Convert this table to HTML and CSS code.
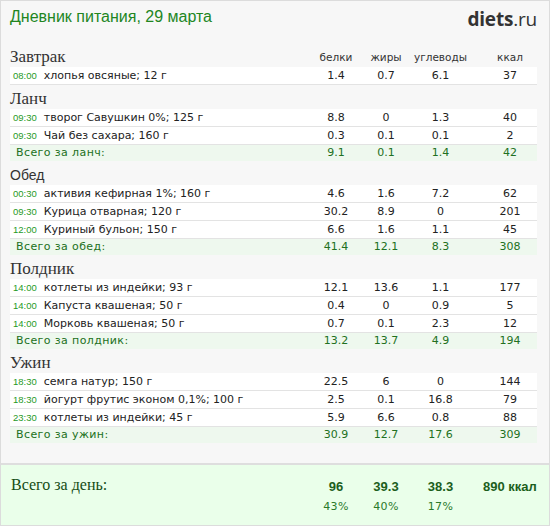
FILE: index.html
```html
<!DOCTYPE html>
<html lang="ru">
<head>
<meta charset="utf-8">
<title>Дневник питания</title>
<link rel="stylesheet" href="styles.css">
</head>
<body>
<div class="diary">
  <div class="main">
    <header class="top">
      <h1 class="title">Дневник питания, 29 марта</h1>
      <div class="logo"><span class="logo-b">diets</span>.ru</div>
    </header>

    <section class="meal meal-first">
      <div class="meal-head">
        <h2 class="meal-name">Завтрак</h2>
        <span class="lbl">белки</span><span class="lbl">жиры</span><span class="lbl c3">углеводы</span><span class="lbl">ккал</span>
      </div>
      <div class="row"><div class="food"><span class="time">08:00</span>хлопья овсяные; 12 г</div><span class="num">1.4</span><span class="num">0.7</span><span class="num c3">6.1</span><span class="num">37</span></div>
    </section>

    <section class="meal">
      <div class="meal-head"><h2 class="meal-name">Ланч</h2></div>
      <div class="row"><div class="food"><span class="time">09:30</span>творог Савушкин 0%; 125 г</div><span class="num">8.8</span><span class="num">0</span><span class="num c3">1.3</span><span class="num">40</span></div>
      <div class="row"><div class="food"><span class="time">09:30</span>Чай без сахара; 160 г</div><span class="num">0.3</span><span class="num">0.1</span><span class="num c3">0.1</span><span class="num">2</span></div>
      <div class="row total"><div class="food">Всего за ланч:</div><span class="num">9.1</span><span class="num">0.1</span><span class="num c3">1.4</span><span class="num">42</span></div>
    </section>

    <section class="meal">
      <div class="meal-head"><h2 class="meal-name meal-sans">Обед</h2></div>
      <div class="row"><div class="food"><span class="time">00:30</span>активия кефирная 1%; 160 г</div><span class="num">4.6</span><span class="num">1.6</span><span class="num c3">7.2</span><span class="num">62</span></div>
      <div class="row"><div class="food"><span class="time">09:30</span>Курица отварная; 120 г</div><span class="num">30.2</span><span class="num">8.9</span><span class="num c3">0</span><span class="num">201</span></div>
      <div class="row"><div class="food"><span class="time">12:00</span>Куриный бульон; 150 г</div><span class="num">6.6</span><span class="num">1.6</span><span class="num c3">1.1</span><span class="num">45</span></div>
      <div class="row total"><div class="food">Всего за обед:</div><span class="num">41.4</span><span class="num">12.1</span><span class="num c3">8.3</span><span class="num">308</span></div>
    </section>

    <section class="meal">
      <div class="meal-head"><h2 class="meal-name">Полдник</h2></div>
      <div class="row"><div class="food"><span class="time">14:00</span>котлеты из индейки; 93 г</div><span class="num">12.1</span><span class="num">13.6</span><span class="num c3">1.1</span><span class="num">177</span></div>
      <div class="row"><div class="food"><span class="time">14:00</span>Капуста квашеная; 50 г</div><span class="num">0.4</span><span class="num">0</span><span class="num c3">0.9</span><span class="num">5</span></div>
      <div class="row"><div class="food"><span class="time">14:00</span>Морковь квашеная; 50 г</div><span class="num">0.7</span><span class="num">0.1</span><span class="num c3">2.3</span><span class="num">12</span></div>
      <div class="row total"><div class="food">Всего за полдник:</div><span class="num">13.2</span><span class="num">13.7</span><span class="num c3">4.9</span><span class="num">194</span></div>
    </section>

    <section class="meal">
      <div class="meal-head"><h2 class="meal-name">Ужин</h2></div>
      <div class="row"><div class="food"><span class="time">18:30</span>семга натур; 150 г</div><span class="num">22.5</span><span class="num">6</span><span class="num c3">0</span><span class="num">144</span></div>
      <div class="row"><div class="food"><span class="time">18:30</span>йогурт фрутис эконом 0,1%; 100 г</div><span class="num">2.5</span><span class="num">0.1</span><span class="num c3">16.8</span><span class="num">79</span></div>
      <div class="row"><div class="food"><span class="time">23:30</span>котлеты из индейки; 45 г</div><span class="num">5.9</span><span class="num">6.6</span><span class="num c3">0.8</span><span class="num">88</span></div>
      <div class="row total"><div class="food">Всего за ужин:</div><span class="num">30.9</span><span class="num">12.7</span><span class="num c3">17.6</span><span class="num">309</span></div>
    </section>
  </div>

  <footer class="day">
    <div class="day-label">Всего за день:</div>
    <span class="day-num">96</span><span class="day-num">39.3</span><span class="day-num c3">38.3</span><span class="day-num day-kcal">890 ккал</span>
    <span class="day-pct">43%</span><span class="day-pct">40%</span><span class="day-pct c3">17%</span><span class="day-pct"></span>
  </footer>
</div>
</body>
</html>
```
FILE: styles.css
```css
* { box-sizing: border-box; }

html, body {
  margin: 0;
  padding: 0;
  background: #f7f7f7;
}

.diary {
  width: 550px;
  height: 526px;
  border: 1px solid #dcdcdc;
  background: #f7f7f7;
  display: flex;
  flex-direction: column;
  font-family: "DejaVu Sans", Verdana, sans-serif;
  color: #222;
}

.main {
  padding: 6px 12px 0 9px;
}

.top {
  display: flex;
  justify-content: space-between;
  align-items: flex-start;
}

.title {
  margin: 0;
  font-family: "Liberation Sans", Arial, sans-serif;
  font-weight: normal;
  font-size: 16px;
  line-height: 20px;
  color: #22861f;
}

.logo {
  font-family: "Open Sans", "DejaVu Sans", sans-serif;
  font-size: 19px;
  line-height: 20px;
  color: #333;
  margin-top: 2px;
  letter-spacing: -0.2px;
}

.logo-b { font-weight: 700; }

.meal { margin-top: 4px; }
.meal-first { margin-top: 18px; }

.meal-head,
.row,
.day {
  display: grid;
  grid-template-columns: 1fr 50px 50px 72px 54px;
}

.meal-head {
  height: 20px;
  align-items: end;
}

.meal-name {
  margin: 0;
  font-family: "Liberation Serif", "Times New Roman", serif;
  font-weight: normal;
  font-size: 17px;
  line-height: 20px;
  color: #333;
}

.meal-sans {
  font-family: "Liberation Sans", Arial, sans-serif;
  font-size: 14px;
}

.lbl {
  font-size: 10.5px;
  line-height: 14px;
  text-align: center;
  color: #333;
  padding-bottom: 3px;
}

.c3 { padding-right: 13px; }

.row {
  height: 18px;
  background: #fff;
  border-bottom: 1px solid #e3e3e3;
  align-items: center;
  font-size: 11px;
  line-height: 17px;
}

.food {
  padding-left: 3px;
  white-space: nowrap;
}

.time {
  font-family: "Liberation Sans", Arial, sans-serif;
  font-size: 9.5px;
  color: #1f9a1f;
  margin-right: 7px;
}

.num {
  text-align: center;
}

.row.total {
  height: 16px;
  margin-bottom: 2px;
  border-bottom: 0;
  background: #eef8ee;
  color: #217021;
  line-height: 16px;
}

.total .food {
  padding-left: 6px;
  letter-spacing: 0.4px;
}

.day {
  margin-top: auto;
  height: 62px;
  border-top: 2px solid #dedede;
  background: #eaffea;
  padding: 10px 12px 0 9px;
  grid-template-rows: 25px 14px;
  align-content: start;
}

.day-label {
  grid-row: 1 / 3;
  padding-left: 1px;
  font-family: "Liberation Serif", "Times New Roman", serif;
  font-size: 16px;
  line-height: 20px;
  color: #154d15;
}

.day-num {
  padding-top: 4px;
  font-family: "Liberation Sans", Arial, sans-serif;
  font-weight: 700;
  font-size: 13px;
  line-height: 16px;
  text-align: center;
  color: #1c5e1c;
}

.day-kcal { padding-right: 9px; white-space: nowrap; }

.day-pct {
  font-size: 11px;
  line-height: 14px;
  text-align: center;
  color: #2a7a2a;
  letter-spacing: 0.3px;
}
```
